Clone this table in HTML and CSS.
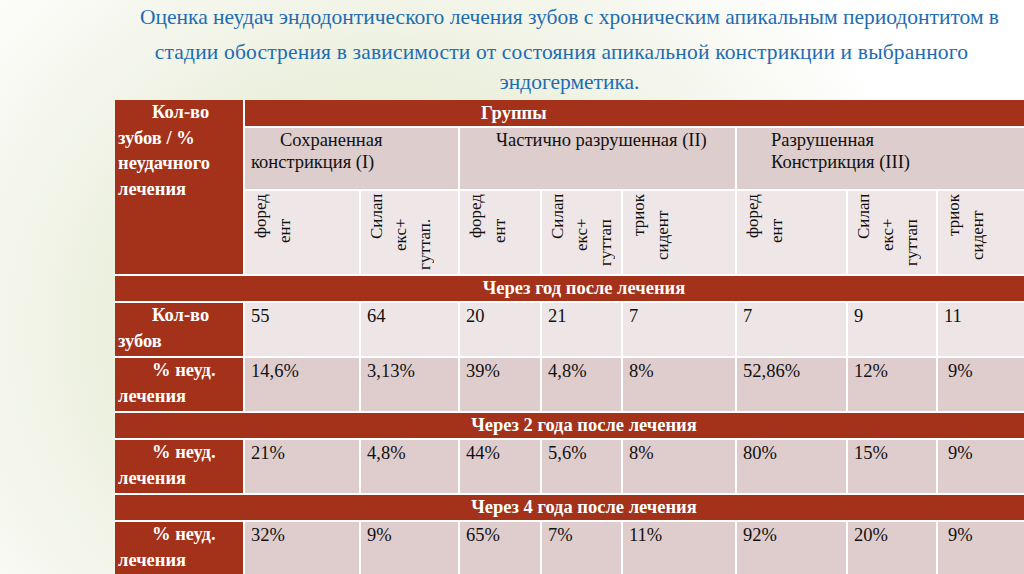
FILE: index.html
```html
<!DOCTYPE html>
<html lang="ru">
<head>
<meta charset="utf-8">
<title>Оценка неудач эндодонтического лечения</title>
<link rel="stylesheet" href="styles.css">
</head>
<body>
<div class="slide">
  <h1 class="title">
    <span class="tline t1">Оценка неудач эндодонтического лечения зубов с хроническим апикальным периодонтитом в</span>
    <span class="tline t2">стадии обострения в зависимости от состояния апикальной констрикции и выбранного</span>
    <span class="tline t3">эндогерметика.</span>
  </h1>

  <table class="grid">
    <colgroup>
      <col class="c0"><col class="c1"><col class="c2"><col class="c3"><col class="c4"><col class="c5"><col class="c6"><col class="c7"><col class="c8">
    </colgroup>
    <tr class="r-top">
      <th rowspan="3" class="lab corner"><span class="ind">Кол-во</span> зубов / % неудачного лечения</th>
      <th colspan="8" class="groups">Группы</th>
    </tr>
    <tr class="r-gname">
      <td colspan="2" class="gname g1"><span class="ind2">Сохраненная</span> констрикция (I)</td>
      <td colspan="3" class="gname g2">Частично разрушенная (II)</td>
      <td colspan="3" class="gname g3">Разрушенная<br>Констрикция (III)</td>
    </tr>
    <tr class="r-vert">
      <td class="vcell"><div class="vt"><span class="l o3">форед</span><span class="l o29">ент</span></div></td>
      <td class="vcell"><div class="vt"><span class="l o3">Силап</span><span class="l o28">екс+</span><span class="l o29">гуттап.</span></div></td>
      <td class="vcell"><div class="vt"><span class="l o3">форед</span><span class="l o29">ент</span></div></td>
      <td class="vcell"><div class="vt"><span class="l o3">Силап</span><span class="l o28">екс+</span><span class="l o29">гуттап</span></div></td>
      <td class="vcell"><div class="vt"><span class="l o3">триок</span><span class="l o20">сидент</span></div></td>
      <td class="vcell"><div class="vt"><span class="l o3">форед</span><span class="l o29">ент</span></div></td>
      <td class="vcell"><div class="vt"><span class="l o3">Силап</span><span class="l o28">екс+</span><span class="l o29">гуттап</span></div></td>
      <td class="vcell"><div class="vt"><span class="l o3">триок</span><span class="l o20">сидент</span></div></td>
    </tr>

    <tr class="r-div"><th colspan="9">Через год после лечения</th></tr>
    <tr class="r-data light">
      <th class="lab"><span class="ind">Кол-во</span> зубов</th>
      <td>55</td><td>64</td><td>20</td><td>21</td><td>7</td><td>7</td><td>9</td><td>11</td>
    </tr>
    <tr class="r-data pink">
      <th class="lab"><span class="ind">% неуд.</span> лечения</th>
      <td>14,6%</td><td>3,13%</td><td>39%</td><td>4,8%</td><td>8%</td><td>52,86%</td><td>12%</td><td><span class="sp">9%</span></td>
    </tr>

    <tr class="r-div"><th colspan="9">Через 2 года после лечения</th></tr>
    <tr class="r-data pink">
      <th class="lab"><span class="ind">% неуд.</span> лечения</th>
      <td>21%</td><td>4,8%</td><td>44%</td><td>5,6%</td><td>8%</td><td>80%</td><td>15%</td><td><span class="sp">9%</span></td>
    </tr>

    <tr class="r-div"><th colspan="9">Через 4 года после лечения</th></tr>
    <tr class="r-data pink">
      <th class="lab"><span class="ind">% неуд.</span> лечения</th>
      <td>32%</td><td>9%</td><td>65%</td><td>7%</td><td>11%</td><td>92%</td><td>20%</td><td><span class="sp">9%</span></td>
    </tr>
  </table>
</div>
</body>
</html>
```

FILE: styles.css
```css
html, body {
  margin: 0;
  padding: 0;
  height: 574px;
  overflow: hidden;
}

body {
  font-family: "Liberation Serif", "Times New Roman", serif;
  color: #111;
  background: radial-gradient(ellipse 560px 520px at 380px 330px, #e4ebd0 0%, #e9eed9 40%, #f4f6ec 70%, #ffffff 100%);
}

.slide {
  width: 1024px;
  height: 574px;
  overflow: hidden;
}

/* Title */
.title {
  margin: 0 0 0 115px;
  width: 909px;
  padding-top: 4px;
  height: 100px;
  box-sizing: border-box;
  display: flex;
  flex-direction: column;
  align-items: center;
  font-family: inherit;
  font-weight: normal;
  font-size: 21.5px;
  line-height: 26px;
  color: #1d6cb2;
  text-align: center;
}

.tline { display: block; white-space: nowrap; }
.t2 { margin-top: 9px; margin-right: 16px; letter-spacing: 0.17px; }
.t3 { margin-top: 4px; }

/* Table */
.grid {
  border-collapse: separate;
  border-spacing: 0;
  table-layout: fixed;
  width: 940px;
  margin-left: 115px;
  font-family: inherit;
  font-size: 18.5px;
  line-height: 26px;
}

.c0 { width: 130px; }
.c1 { width: 116px; }
.c2 { width: 99px; }
.c3 { width: 82px; }
.c4 { width: 81px; }
.c5 { width: 114px; }
.c6 { width: 111px; }
.c7 { width: 90px; }
.c8 { width: 117px; }

.grid th,
.grid td {
  box-sizing: border-box;
  border-right: 2px solid #fff;
  border-bottom: 2px solid #fff;
  padding: 0 0 0 6px;
  vertical-align: top;
  text-align: left;
  font-weight: normal;
}

.grid .lab {
  background: #a43119;
  color: #fff;
  font-weight: bold;
  padding: 0 2px 0 3px;
  line-height: 25.5px;
}

.ind { padding-left: 34px; }

.grid .groups {
  background: #a43119;
  color: #fff;
  font-weight: bold;
  padding-left: 236px;
}

.r-top { height: 27px; }
.r-gname { height: 63px; }
.r-vert { height: 85px; }
.r-div { height: 27px; }
.r-data { height: 55px; }

.grid .gname {
  background: #ddcdcd;
  padding-top: 1px;
  line-height: 22px;
}
.grid .g1 { padding-left: 6px; }
.ind2 { padding-left: 29px; }
.grid .g2 { padding-left: 36px; }
.grid .g3 { padding-left: 34px; }

.r-vert td { background: #efe7e7; }

.grid .vcell { padding: 0 0 0 4px; }

.vt {
  display: inline-block;
  vertical-align: top;
  writing-mode: vertical-rl;
  transform: rotate(180deg);
  height: 83px;
  text-align: end;
  line-height: 24px;
  font-size: 17px;
}

.l { display: block; }
.o3 { padding-inline-end: 3px; }
.o20 { padding-inline-end: 20px; }
.o28 { padding-inline-end: 27px; }
.o29 { padding-inline-end: 28px; }

.grid .r-div th {
  background: #a43119;
  color: #fff;
  font-weight: bold;
  text-align: center;
  padding: 0;
  line-height: 25px;
}

.light td { background: #eee6e6; }
.pink td { background: #dfcdcd; }

.sp { padding-left: 4px; }
```
